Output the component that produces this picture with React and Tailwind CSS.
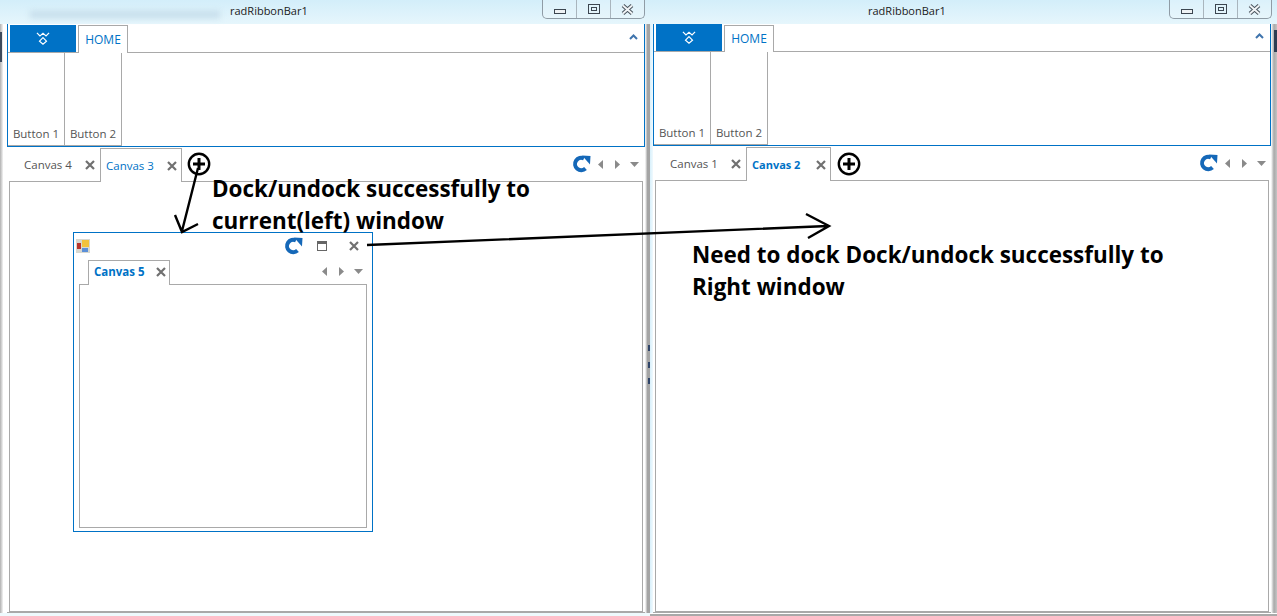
import React from 'react';

const CloseIcon = ({ size = 10 }) => (
  <svg width={size} height={size} viewBox="0 0 10 10" className="shrink-0">
    <path d="M1 1L9 9M9 1L1 9" stroke="#707070" strokeWidth="2.2" fill="none" />
  </svg>
);

const RefreshIcon = () => (
  <svg width="19" height="19" viewBox="0 0 19 19" className="shrink-0">
    <path d="M13.5 13.5A6.2 6.2 0 1 1 12 3.4" stroke="#1568b8" strokeWidth="4" fill="none" />
    <path d="M10 0.5L18.5 1L18 9.5Z" fill="#1568b8" />
  </svg>
);

const ScrollArrows = () => (
  <div className="flex items-center gap-[12px]">
    <svg width="5" height="9" viewBox="0 0 5 9"><path d="M5 0V9L0 4.5Z" fill="#8a8a8a" /></svg>
    <svg width="5" height="9" viewBox="0 0 5 9"><path d="M0 0V9L5 4.5Z" fill="#8a8a8a" /></svg>
    <svg width="9" height="5" viewBox="0 0 9 5" className="-ml-[2px]"><path d="M0 0H9L4.5 5Z" fill="#8a8a8a" /></svg>
  </div>
);

const PlusCircle = () => (
  <svg width="24" height="24" viewBox="0 0 24 24" className="shrink-0">
    <circle cx="12" cy="12" r="10.2" stroke="#000" strokeWidth="2.4" fill="none" />
    <path d="M12 6V18M6 12H18" stroke="#000" strokeWidth="3" fill="none" />
  </svg>
);

const Logo = () => (
  <svg width="14" height="13" viewBox="0 0 16 15" className="-mt-[1px]">
    <path d="M1 1L4.5 4.5L8 1.5L11.5 4.5L15 1M8 6.5L12 10.5L8 14L4 10.5Z" stroke="#fff" strokeWidth="1.4" fill="none" />
  </svg>
);

const CaptionButtons = () => (
  <div className="flex h-[19px] w-[103px] rounded-b-[5px] border border-t-0 border-[#8f9ca6] bg-white/20">
    <div className="flex flex-1 items-center justify-center border-r border-[#a9b5bd]">
      <div className="mt-[4px] h-[5px] w-[12px] border border-[#3c4650] bg-[#eef2f4]" />
    </div>
    <div className="flex flex-1 items-center justify-center border-r border-[#a9b5bd]">
      <div className="flex h-[10px] w-[12px] items-center justify-center border border-[#3c4650]">
        <div className="h-[4px] w-[6px] border border-[#3c4650]" />
      </div>
    </div>
    <div className="flex flex-1 items-center justify-center">
      <svg width="13" height="11" viewBox="0 0 13 11">
        <path d="M2 1.5L11 9.5M11 1.5L2 9.5" stroke="#4a545e" strokeWidth="3.8" fill="none" />
        <path d="M2 1.5L11 9.5M11 1.5L2 9.5" stroke="#f2f5f7" strokeWidth="1.8" fill="none" />
      </svg>
    </div>
  </div>
);

const Tab = ({ label, active, bold, width, pl, xLeft }) => (
  <div
    style={{ width, paddingLeft: pl }}
    className={`relative flex h-[34px] shrink-0 items-center pt-[2px] ${
      active ? 'z-10 -mb-[1px] border border-b-0 border-[#a9a9a9] bg-white text-[#0072c6]' : 'text-[#555]'
    } ${bold ? 'text-[11px] font-bold' : 'text-[11.5px]'}`}
  >
    <span>{label}</span>
    <span className="flex" style={{ marginLeft: xLeft }}>
      <CloseIcon />
    </span>
  </div>
);

const RibbonWindow = ({ cfg }) => (
  <div className={`flex h-full flex-col ${cfg.width}`}>
    <div className="relative flex h-[24px] shrink-0 items-start bg-gradient-to-b from-[#d3eefa] to-[#e6f6fc]">
      <span className={`mt-[3px] text-[11px] leading-[16px] text-[#1b1b1b] ${cfg.titleOffset}`}>radRibbonBar1</span>
      {cfg.blurTitle && <div className="absolute left-[30px] top-[11px] h-[7px] w-[190px] bg-[#c5dcea] blur-[3px]" />}
      <div className="absolute right-[5px] top-0">
        <CaptionButtons />
      </div>
    </div>
    <div className="flex min-h-0 flex-1">
      <div className={cfg.gutterL} />
      <div className="flex flex-1 flex-col bg-white">
        <div className="border-x border-b border-[#0072c6]">
          <div className={`flex ${cfg.rowH} items-end border-b border-[#a9a9a9] pl-[2px]`}>
            <div className={`flex ${cfg.appH} w-[66px] items-center justify-center bg-[#0072c6]`}>
              <Logo />
            </div>
            <div className={`-mb-[1px] ml-[2px] flex ${cfg.homeH} w-[50px] items-center justify-center border border-b-0 border-[#a9a9a9] bg-white text-[12px] text-[#0072c6]`}>
              HOME
            </div>
            <svg width="9" height="6" viewBox="0 0 9 6" className="mb-[12px] ml-auto mr-[6px]">
              <path d="M1 5L4.5 1.5L8 5" stroke="#3f74ad" strokeWidth="2" fill="none" />
            </svg>
          </div>
          <div className="flex h-[93px]">
            {['Button 1', 'Button 2'].map((b) => (
              <div key={b} className="flex w-[57px] items-end justify-center border-b border-r border-[#a9a9a9] pb-[3px] text-[11.5px] leading-[16px] text-[#555]">
                {b}
              </div>
            ))}
          </div>
        </div>
        <div className="flex min-h-0 flex-1 flex-col">
          <div className={`flex h-[34px] shrink-0 items-center ${cfg.tabRowPl}`}>
            {cfg.tabs.map((t) => (
              <Tab key={t.label} {...t} />
            ))}
            <span className={`flex ${cfg.plusMl}`}>
              <PlusCircle />
            </span>
            <div className={`ml-auto flex items-center pt-[1px] ${cfg.toolsGap} ${cfg.toolsMr}`}>
              <RefreshIcon />
              <ScrollArrows />
            </div>
          </div>
          <div className="mx-[2px] flex-1 border border-[#a9a9a9]" />
          <div className="h-[1px] bg-[#a9a9a9]" />
        </div>
      </div>
      <div className={cfg.gutterR} />
    </div>
    <div className={`h-[3px] shrink-0 ${cfg.footer}`} />
  </div>
);

const leftWin = {
  width: 'w-[650px]',
  titleOffset: 'ml-[230px]',
  blurTitle: true,
  gutterL: 'w-[7px] shrink-0 bg-gradient-to-r from-[#b0b0b0] via-white to-white',
  gutterR: 'w-[5px] shrink-0 bg-gradient-to-r from-white via-[#a4a4a4] to-[#a4a4a4]',
  footer: 'bg-[#eefafd]',
  rowH: 'h-[29px]',
  appH: 'h-[27px]',
  homeH: 'h-[28px]',
  tabRowPl: 'pl-[1px]',
  plusMl: 'ml-[5px]',
  toolsGap: 'gap-[7px]',
  toolsMr: 'mr-[6px]',
  tabs: [
    { label: 'Canvas 4', width: 92, pl: 16, xLeft: 13 },
    { label: 'Canvas 3', active: true, width: 82, pl: 5, xLeft: 13 },
  ],
};

const rightWin = {
  width: 'flex-1',
  titleOffset: 'ml-[218px]',
  gutterL: 'w-[3px] shrink-0 bg-gradient-to-r from-[#d8f0fb] to-[#f0fafe]',
  gutterR: 'w-[6px] shrink-0 bg-gradient-to-r from-white via-[#a9a9a9] to-[#c4c4c4]',
  footer: 'border-b-2 border-[#a9a9a9] bg-white',
  rowH: 'h-[28px]',
  appH: 'h-[27px]',
  homeH: 'h-[27px]',
  tabRowPl: 'pl-[2px]',
  plusMl: 'ml-[6px] pt-[1px]',
  toolsGap: 'gap-[7px]',
  toolsMr: 'mr-[5px]',
  tabs: [
    { label: 'Canvas 1', width: 91, pl: 15, xLeft: 13 },
    { label: 'Canvas 2', active: true, bold: true, width: 85, pl: 5, xLeft: 16 },
  ],
};

const FloatingWindow = () => (
  <div className="absolute left-[73px] top-[232px] z-20 flex h-[300px] w-[300px] flex-col border border-[#0072c6] bg-white">
    <div className="flex h-[26px] shrink-0 items-center pl-[2px] pr-[13px]">
      <svg width="14" height="14" viewBox="0 0 14 14" className="shrink-0">
        <rect x="0" y="0" width="14" height="14" fill="#d8d8d0" />
        <rect x="1" y="4" width="4" height="6" fill="#b8352c" />
        <rect x="6" y="1" width="7" height="7" fill="#f2c23e" />
        <rect x="6" y="9" width="6" height="4" fill="#5b8fd8" />
      </svg>
      <div className="ml-auto flex items-center">
        <RefreshIcon />
        <div className="ml-[14px] mr-[22px] h-[10px] w-[10px] border border-t-[3px] border-[#666]" />
        <CloseIcon />
      </div>
    </div>
    <div className="flex h-[25px] shrink-0 items-end pl-[14px] pr-[9px]">
      <div className="z-10 -mb-[1px] flex h-[25px] w-[82px] items-center border border-b-0 border-[#a9a9a9] bg-white pb-[2px] pl-[5px] text-[11.5px] font-bold text-[#0072c6]">
        <span>Canvas 5</span>
        <span className="ml-[11px] flex"><CloseIcon /></span>
      </div>
      <div className="mb-[8px] ml-auto">
        <ScrollArrows />
      </div>
    </div>
    <div className="mx-[5px] mb-[3px] flex-1 border border-[#a9a9a9]" />
  </div>
);

const Notes = () => (
  <>
    <p className="absolute left-[212px] top-[173px] z-30 m-0 text-[22.45px] font-bold leading-[32px] text-black">
      Dock/undock successfully to
      <br />
      current(left) window
    </p>
    <p className="absolute left-[692px] top-[239px] z-30 m-0 text-[22.45px] font-bold leading-[32px] text-black">
      Need to dock Dock/undock successfully to
      <br />
      Right window
    </p>
    <svg width="1277" height="616" className="pointer-events-none absolute left-0 top-0 z-30">
      <g stroke="#000" strokeWidth="2.4" fill="none">
        <path d="M198 168L182 231M175 215L182 232L198 224" />
        <path d="M367 245L828 226M806 214L829 226L808 238" />
      </g>
    </svg>
  </>
);

// bits of the desktop showing past the window edges
const EdgeBits = () => (
  <>
    <div className="absolute left-0 top-[32px] z-10 h-[30px] w-[2px] bg-[#3c4a5c]" />
    <div className="absolute right-0 top-[30px] z-10 h-[22px] w-[3px] bg-[#2f3d52]" />
    {[345, 362, 378].map((y) => (
      <div key={y} style={{ top: y }} className="absolute left-[648px] z-10 h-[6px] w-[2px] bg-[#2f4468]" />
    ))}
  </>
);

export default function App() {
  return (
    <div
      className="relative flex h-[616px] w-[1277px] overflow-hidden bg-white text-black"
      style={{ fontFamily: '"Open Sans", sans-serif' }}
    >
      <RibbonWindow cfg={leftWin} />
      <RibbonWindow cfg={rightWin} />
      <FloatingWindow />
      <EdgeBits />
      <Notes />
    </div>
  );
}
